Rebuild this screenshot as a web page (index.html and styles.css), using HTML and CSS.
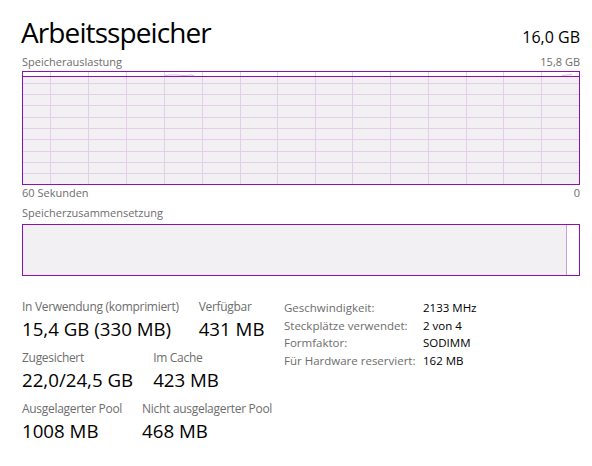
FILE: index.html
```html
<!DOCTYPE html>
<html lang="de">
<head>
<meta charset="utf-8">
<title>Arbeitsspeicher</title>
<link rel="stylesheet" href="styles.css">
</head>
<body>
<main class="page">
  <header class="header">
    <h1 class="title">Arbeitsspeicher</h1>
    <span class="total">16,0 GB</span>
  </header>

  <div class="caption-row caption-top">
    <span>Speicherauslastung</span>
    <span>15,8 GB</span>
  </div>
  <svg class="graph" width="558" height="114" viewBox="0 0 558 114">
    <rect class="graph-fill" x="0" y="5" width="558" height="109"/>
    <g class="grid">
      <line x1="0" x2="558" y1="12.5" y2="12.5"/>
      <line x1="0" x2="558" y1="23.5" y2="23.5"/>
      <line x1="0" x2="558" y1="34.5" y2="34.5"/>
      <line x1="0" x2="558" y1="46.5" y2="46.5"/>
      <line x1="0" x2="558" y1="57.5" y2="57.5"/>
      <line x1="0" x2="558" y1="68.5" y2="68.5"/>
      <line x1="0" x2="558" y1="80.5" y2="80.5"/>
      <line x1="0" x2="558" y1="91.5" y2="91.5"/>
      <line x1="0" x2="558" y1="102.5" y2="102.5"/>
      <line y1="0" y2="114" x1="28.5" x2="28.5"/>
      <line y1="0" y2="114" x1="66.5" x2="66.5"/>
      <line y1="0" y2="114" x1="104.5" x2="104.5"/>
      <line y1="0" y2="114" x1="142.5" x2="142.5"/>
      <line y1="0" y2="114" x1="180.5" x2="180.5"/>
      <line y1="0" y2="114" x1="218.5" x2="218.5"/>
      <line y1="0" y2="114" x1="255.5" x2="255.5"/>
      <line y1="0" y2="114" x1="293.5" x2="293.5"/>
      <line y1="0" y2="114" x1="330.5" x2="330.5"/>
      <line y1="0" y2="114" x1="368.5" x2="368.5"/>
      <line y1="0" y2="114" x1="406.5" x2="406.5"/>
      <line y1="0" y2="114" x1="444.5" x2="444.5"/>
      <line y1="0" y2="114" x1="481.5" x2="481.5"/>
      <line y1="0" y2="114" x1="519.5" x2="519.5"/>
    </g>
    <path class="usage-bump" d="M143 4.5 C150 3.5 156 4 160 4.5 C164 5 168 3.5 172 4.5"/>
    <path class="usage-bump" d="M540 4.5 L550 3.5"/>
    <line class="usage" x1="0" x2="558" y1="5.5" y2="5.5"/>
    <rect class="graph-border" x="0.5" y="0.5" width="557" height="113"/>
  </svg>
  <div class="caption-row caption-axis">
    <span>60 Sekunden</span>
    <span>0</span>
  </div>

  <div class="caption-row caption-comp">
    <span>Speicherzusammensetzung</span>
  </div>
  <div class="composition">
    <div class="comp-used"></div>
    <div class="comp-free"></div>
  </div>

  <section class="stats">
    <div class="stats-left">
      <div class="stat-row">
        <div class="stat">
          <div class="stat-label">In Verwendung (komprimiert)</div>
          <div class="stat-value">15,4 GB (330 MB)</div>
        </div>
        <div class="stat">
          <div class="stat-label">Verfügbar</div>
          <div class="stat-value">431 MB</div>
        </div>
      </div>
      <div class="stat-row">
        <div class="stat">
          <div class="stat-label">Zugesichert</div>
          <div class="stat-value">22,0/24,5 GB</div>
        </div>
        <div class="stat">
          <div class="stat-label">Im Cache</div>
          <div class="stat-value">423 MB</div>
        </div>
      </div>
      <div class="stat-row">
        <div class="stat">
          <div class="stat-label">Ausgelagerter Pool</div>
          <div class="stat-value">1008 MB</div>
        </div>
        <div class="stat">
          <div class="stat-label">Nicht ausgelagerter Pool</div>
          <div class="stat-value">468 MB</div>
        </div>
      </div>
    </div>
    <dl class="props">
      <dt>Geschwindigkeit:</dt><dd>2133 MHz</dd>
      <dt>Steckplätze verwendet:</dt><dd>2 von 4</dd>
      <dt>Formfaktor:</dt><dd>SODIMM</dd>
      <dt>Für Hardware reserviert:</dt><dd>162 MB</dd>
    </dl>
  </section>
</main>
</body>
</html>
```

FILE: styles.css
```css
html, body {
  margin: 0;
  padding: 0;
  background: #ffffff;
}

body {
  font-family: "Segoe UI", "Open Sans", "Noto Sans", sans-serif;
  color: #000000;
}

.page {
  width: 558px;
  padding: 15px 0 0 22px;
}

.header {
  display: flex;
  justify-content: space-between;
  align-items: baseline;
  height: 34px;
}

.title {
  margin: 0;
  font-size: 28px;
  font-weight: 400;
  line-height: 34px;
  letter-spacing: -0.9px;
  margin-left: -1px;
}

.total {
  font-size: 16px;
  line-height: 20px;
}

.caption-row {
  display: flex;
  justify-content: space-between;
  font-size: 11px;
  line-height: 14px;
  color: #6d6d6d;
}

.caption-top {
  margin-top: 6px;
  margin-bottom: 2px;
}

.graph {
  display: block;
}

.graph-fill {
  fill: #f3f0f4;
}

.grid line {
  stroke: #e3cfe9;
  stroke-width: 1;
}

.usage {
  stroke: #8b12ae;
  stroke-width: 1;
}

.usage-bump {
  fill: none;
  stroke: #d9b6e4;
  stroke-width: 1;
}

.graph-border {
  fill: none;
  stroke: #8b12ae;
  stroke-width: 1;
}

.caption-axis {
  margin-top: 1px;
}

.caption-comp {
  margin-top: 6px;
}

.composition {
  margin-top: 4px;
  height: 50px;
  border: 1px solid #8b12ae;
  display: flex;
}

.comp-used {
  flex: 0 0 543px;
  background: #f3f0f4;
  border-right: 1px solid #c9a1d9;
}

.comp-free {
  flex: 1;
  background: #ffffff;
}

.stats {
  margin-top: 23px;
  display: grid;
  grid-template-columns: 262px 1fr;
  align-items: start;
}

.stats-left {
  display: flex;
  flex-direction: column;
  gap: 9px;
}

.stat-row {
  display: flex;
  gap: 20px;
}

.stat-label {
  font-size: 12px;
  line-height: 16px;
  letter-spacing: -0.3px;
  color: #6d6d6d;
  white-space: nowrap;
}

.stat-value {
  margin-top: 2px;
  font-size: 18.7px;
  line-height: 24px;
  white-space: nowrap;
}

.props {
  margin: 0;
  display: grid;
  grid-template-columns: 139px 1fr;
  align-content: start;
  font-size: 11.5px;
  line-height: 17.7px;
}

.props dt {
  color: #6d6d6d;
  white-space: nowrap;
}

.props dd {
  margin: 0;
  white-space: nowrap;
}
```
